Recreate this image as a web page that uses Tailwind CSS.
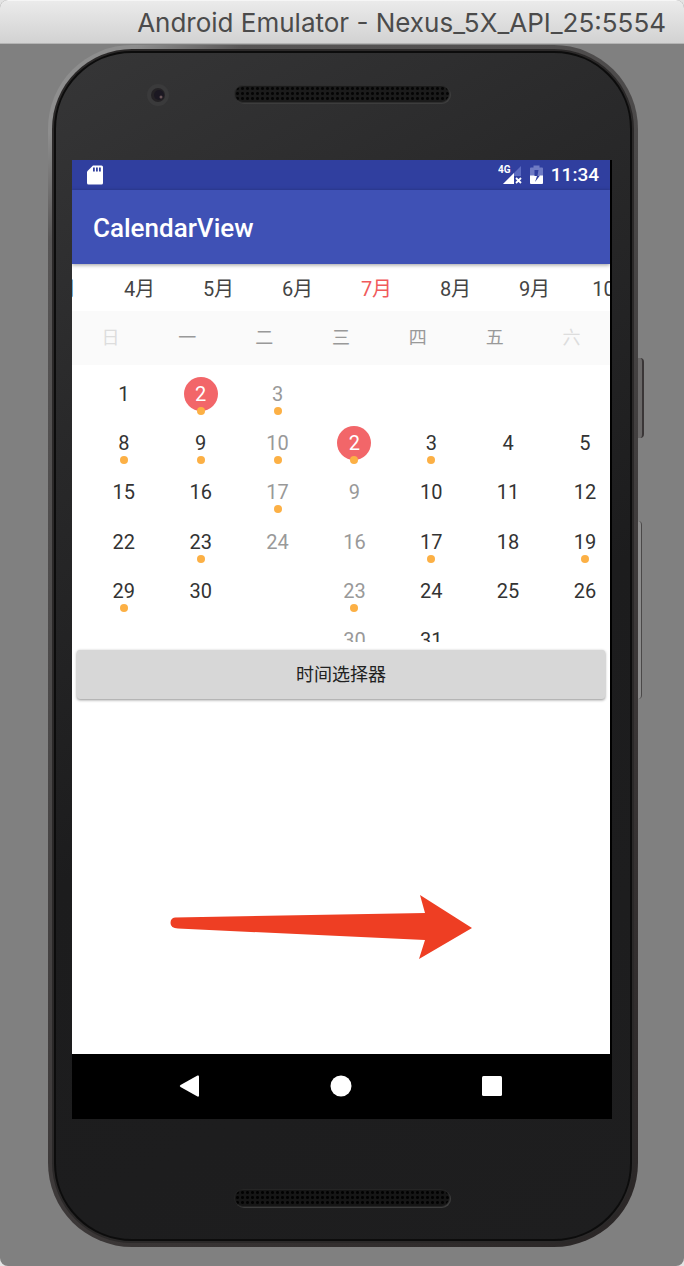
<!DOCTYPE html>
<html lang="zh-CN">
<head>
<meta charset="utf-8">
<meta name="viewport" content="width=device-width, initial-scale=1">
<title>Android Emulator - Nexus_5X_API_25:5554</title>
<script src="https://cdn.jsdelivr.net/npm/@tailwindcss/browser@4"></script>
</head>
<body class="bg-[#e4e4e4] font-[Roboto,'Noto_Sans_CJK_SC',sans-serif]">
<div class="flex min-h-screen flex-col overflow-hidden rounded-t-lg rounded-b-lg bg-[#808080]">
  <header class="flex h-11 items-center justify-end border-t border-b border-t-[#f6f6f6] border-b-[#b4b4b4] bg-linear-to-b from-[#ebebeb] to-[#d2d2d2] pt-0.5 pr-[18px]">
    <h1 class="font-[Inter,sans-serif] text-[26px] leading-8 whitespace-nowrap text-[#4b4b4b]">Android Emulator - Nexus_5X_API_25:5554</h1>
  </header>

  <!-- Phone shell: metal rim, dark lip, glass -->
  <div class="relative mt-px mr-[46px] mb-[19px] ml-12 flex min-w-0 flex-1 rounded-[84px] bg-[linear-gradient(135deg,#8e8e8e_5%,#575555_11%,#4a4848_40%,#3a3636_70%,#2a2626_100%)] p-1">
    <div class="absolute top-[313px] -right-[6px] h-20 w-[6px] rounded-r-sm border-r-2 border-[#3a3637] bg-[#6a6868]"></div>
    <div class="absolute top-[476px] -right-[4px] h-[178px] w-[4px] rounded-r-sm border-r border-[#4a4848] bg-[#8c8c8c]"></div>
    <div class="flex min-w-0 flex-1 rounded-[80px] bg-[#2b2929] p-[2px]">
      <div class="flex min-w-0 flex-1 flex-col rounded-[78px] border-2 border-[#0c0c0c] bg-[linear-gradient(150deg,#363637_0%,#29292a_25%,#1c1c1d_55%,#1e1e1f_100%)]">
        <div class="flex h-[107px] shrink-0 items-start pt-8 pl-[90px]">
          <svg class="mt-[-2px] size-6" viewBox="0 0 24 24" aria-hidden="true"><circle cx="12" cy="12" r="11" fill="#3a3a3b"/><circle cx="12" cy="12" r="7" fill="#242225"/><circle cx="13" cy="12" r="5" fill="#1b1822"/><circle cx="15" cy="14" r="1.500" fill="#6b5558"/></svg>
          <div class="ml-16 h-[18px] w-[216px] rounded-full border border-[#2e2e2e] bg-[#1b1b1b] bg-[radial-gradient(circle,#050505_1px,transparent_2px)] bg-size-[5px_5px] shadow-[1px_1px_0_#3d3d3d]"></div>
        </div>

        <main class="mr-[18px] ml-4 flex min-w-0 flex-1 flex-col overflow-hidden bg-black">
          <div class="mr-0.5 flex min-w-0 flex-1 flex-col bg-white">
            <div class="flex h-[30px] shrink-0 items-center bg-[#303f9f] pr-[11px] pl-[15px]">
              <svg class="h-5 w-4" viewBox="0 0 16 20" aria-hidden="true"><path d="M6 0.5h8.500a1.500 1.500 0 0 1 1.500 1.500v16a1.500 1.500 0 0 1-1.500 1.500h-13A1.500 1.500 0 0 1 0 18V6.500z" fill="#fff"/><path d="M6 2.500h1.800v4H6zM9 2.500h1.800v4H9zM12 2.500h1.800v4H12z" fill="#303f9f"/></svg>
              <svg class="ml-auto h-5 w-6" viewBox="0 0 24 20" aria-hidden="true"><path d="M23 1v18H5z" fill="#5c6bc0"/><path d="M16 8v11H5z" fill="#fff"/><path d="M16 11h8v9h-8z" fill="#303f9f"/><path d="M18 13l5 5M23 13l-5 5" stroke="#fff" stroke-width="1.800"/><rect width="12" height="9" fill="#303f9f"/><text x="0" y="8" font-size="10" font-weight="700" fill="#fff">4G</text></svg>
              <svg class="ml-2 h-5 w-[13px]" viewBox="0 0 13 20" aria-hidden="true"><path d="M0 3.500A1 1 0 0 1 1 2.500h2.500V.5h6v2H12a1 1 0 0 1 1 1V11H0z" fill="#6f7bc4"/><path d="M0 10.500h13V18a1 1 0 0 1-1 1H1a1 1 0 0 1-1-1z" fill="#fff"/><path d="M8.500 5H4.500v6h2.500L5 17l5-6.500H7.500z" fill="#303f9f"/></svg>
              <span class="ml-2 text-[19px] leading-5 font-medium text-white">11:34</span>
            </div>
            <div class="relative flex h-[74px] shrink-0 items-center bg-[#3f51b5] px-[21px] pt-0.5 shadow-[0_1px_4px_rgba(0,0,0,0.4)]">
              <h2 class="text-[26px] leading-8 font-medium text-white">CalendarView</h2>
            </div>

            <nav class="flex h-[47px] shrink-0 items-center overflow-hidden pt-0.5 text-xl text-[#444]" aria-label="月份">
              <div class="-ml-[51px] flex shrink-0 text-center">
                <button class="w-[79px]">3月</button>
                <button class="w-[79px]">4月</button>
                <button class="w-[79px]">5月</button>
                <button class="w-[79px]">6月</button>
                <button class="w-[79px] text-[#f05a5c]" aria-current="true">7月</button>
                <button class="w-[79px]">8月</button>
                <button class="w-[79px]">9月</button>
                <button class="w-[79px]">10月</button>
              </div>
            </nav>
            <div class="grid h-[54px] shrink-0 grid-cols-7 items-center bg-[#fafafa] text-center text-lg text-[#999]">
              <span class="text-[#ddd]">日</span><span>一</span><span>二</span><span>三</span><span>四</span><span>五</span><span class="text-[#ddd]">六</span>
            </div>
            <section class="h-[277px] shrink-0 overflow-hidden pt-1">
              <div id="months" class="-ml-[294px] flex"></div>
            </section>
            <div class="mt-2 px-[5px]">
              <button class="h-[49px] w-full rounded-[3px] bg-[#d7d7d7] text-lg text-[#212121] shadow-[0_1px_3px_rgba(0,0,0,0.45)]">时间选择器</button>
            </div>
            <svg class="mt-[196px] ml-[98px] h-16 w-[302px]" viewBox="0 0 302 64" aria-hidden="true"><path d="M5 22.500L255 18 250 0l52 33-53 31 6-19L8 33.500Q.5 33 .5 28t4.500-5.500z" fill="#ee3e23"/></svg>
          </div>
          <div class="flex h-[65px] shrink-0 items-center justify-center gap-[129px] pr-0.5 pb-0.5">
            <button aria-label="返回"><svg class="block size-[22px]" viewBox="0 0 22 22"><path d="M1.500 10Q0 11 1.500 12L18.500 21.500Q20 22 20 20.500V1.500Q20 0 18.500.5z" fill="#fff"/></svg></button>
            <button aria-label="主页"><svg class="block size-[22px]" viewBox="0 0 22 22"><circle cx="11" cy="11" r="10.500" fill="#fff"/></svg></button>
            <button aria-label="概览"><svg class="block size-[22px]" viewBox="0 0 22 22"><rect x="1" y="1" width="20" height="20" rx="1.500" fill="#fff"/></svg></button>
          </div>
        </main>

        <div class="flex h-[120px] shrink-0 items-start justify-center pt-[70px] pr-0.5">
          <div class="h-[18px] w-[216px] rounded-full border border-[#252525] bg-[#161616] bg-[radial-gradient(circle,#020202_1px,transparent_2px)] bg-size-[5px_5px] shadow-[1px_1px_0_#3d3d3d]"></div>
        </div>
      </div>
    </div>
  </div>
</div>

<script>
  // first: weekday of day 1 (0 = Sunday); from/to: weekday columns in view; marks: days that carry an event dot
  const months = [
    { name: '2017年6月', first: 4, days: 30, from: 4, to: 6, marks: [2, 3, 8, 9, 10, 17, 23, 29] },
    { name: '2017年7月', first: 6, days: 31, from: 0, to: 3, marks: [2, 3, 17, 19, 23] }
  ];
  const selected = 2;
  document.getElementById('months').innerHTML = months.map(m => {
    let rows = '';
    for (let w = 0; w < 6; w++) {
      rows += '<tr class="h-[49px]">';
      for (let c = 0; c < 7; c++) {
        const d = w * 7 + c - m.first + 1;
        if (d < 1 || d > m.days || c < m.from || c > m.to) { rows += '<td class="p-0"></td>'; continue; }
        const tone = d === selected ? 'bg-[#f26669] text-white' : (c === 0 || c === 6) ? 'text-[#999]' : 'text-[#333]';
        const dot = m.marks.includes(d) ? '<span class="absolute -bottom-1 left-[13px] size-2 rounded-full bg-[#fcb045]"></span>' : '';
        rows += `<td class="p-0"><button class="relative mx-auto block size-[34px] rounded-full ${tone}">${d}${dot}</button></td>`;
      }
      rows += '</tr>';
    }
    return `<table class="h-[296px] w-[538px] shrink-0 table-fixed border-collapse text-center text-xl leading-[34px]" aria-label="${m.name}"><tbody>${rows}</tbody></table>`;
  }).join('');
</script>
</body>
</html>
